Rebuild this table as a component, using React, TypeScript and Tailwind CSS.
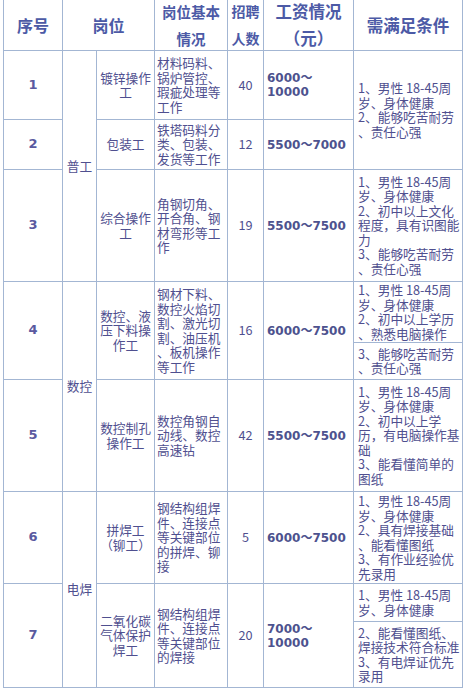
import React from "react";

const B = "border-r border-b border-[#a3b6d3]";

function Lines({ lines }: { lines: string[] }) {
  return (
    <div>
      {lines.map((l, i) => (
        <div key={i} className="whitespace-nowrap">
          {l}
        </div>
      ))}
    </div>
  );
}

type Row = {
  no: string;
  post: string[];
  desc: string[];
  count: string;
  salary: string[];
};

const rows: Row[] = [
  { no: "1", post: ["镀锌操作", "工"], desc: ["材料码料、", "锅炉管控、", "瑕疵处理等", "工作"], count: "40", salary: ["6000～", "10000"] },
  { no: "2", post: ["包装工"], desc: ["铁塔码料分", "类、包装、", "发货等工作"], count: "12", salary: ["5500～7000"] },
  { no: "3", post: ["综合操作", "工"], desc: ["角钢切角、", "开合角、钢", "材弯形等工", "作"], count: "19", salary: ["5500～7500"] },
  { no: "4", post: ["数控、液", "压下料操", "作工"], desc: ["钢材下料、", "数控火焰切", "割、激光切", "割、油压机", "、板机操作", "等工作"], count: "16", salary: ["6000～7500"] },
  { no: "5", post: ["数控制孔", "操作工"], desc: ["数控角钢自", "动线、数控", "高速钻"], count: "42", salary: ["5500～7500"] },
  { no: "6", post: ["拼焊工", "（铆工）"], desc: ["钢结构组焊", "件、连接点", "等关键部位", "的拼焊、铆", "接"], count: "5", salary: ["6000～7500"] },
  { no: "7", post: ["二氧化碳", "气体保护", "焊工"], desc: ["钢结构组焊", "件、连接点", "等关键部位", "的焊接"], count: "20", salary: ["7000～", "10000"] },
];

const rowStart = [
  "row-start-2",
  "row-start-3",
  "row-start-4",
  "row-start-5",
  "row-start-6",
  "row-start-7",
  "row-start-8",
];

export default function App() {
  return (
    <div className="w-[463px] h-[689px] overflow-hidden bg-white font-[family-name:'Noto_Sans_CJK_SC',sans-serif] text-[12.7px] leading-[14.5px] text-[#4f4f8f]">
      <div className="ml-[3px] border-l border-[#a3b6d3] grid grid-cols-[59px_34px_58px_73px_36px_90px_109px] grid-rows-[51px_69px_50px_112px_98px_112px_92px_104px]">
        {/* header */}
        <div className={`${B} col-start-1 row-start-1 flex items-center justify-center font-bold text-[16px] leading-[27px] text-[#4c5aa6]`}>序号</div>
        <div className={`${B} col-start-2 col-span-2 row-start-1 flex items-center justify-center font-bold text-[16px] leading-[27px] text-[#4c5aa6]`}>岗位</div>
        <div className={`${B} col-start-4 row-start-1 flex items-center justify-center text-center font-bold text-[14.5px] leading-[27px] text-[#4c5aa6]`}>
          <Lines lines={["岗位基本", "情况"]} />
        </div>
        <div className={`${B} col-start-5 row-start-1 flex items-center justify-center text-center font-bold text-[14px] leading-[27px] text-[#4c5aa6]`}>
          <Lines lines={["招聘", "人数"]} />
        </div>
        <div className={`${B} col-start-6 row-start-1 flex items-center justify-center text-center font-bold text-[16.5px] leading-[27px] text-[#4c5aa6]`}>
          <Lines lines={["工资情况", "（元）"]} />
        </div>
        <div className={`${B} col-start-7 row-start-1 flex items-center justify-center font-bold text-[16.5px] leading-[27px] text-[#4c5aa6]`}>需满足条件</div>

        {/* group column */}
        <div className={`${B} col-start-2 row-start-2 row-span-3 flex items-center justify-center`}>普工</div>
        <div className={`${B} col-start-2 row-start-5 row-span-2 flex items-center justify-center`}>数控</div>
        <div className={`${B} col-start-2 row-start-7 row-span-2 flex items-center justify-center`}>电焊</div>

        {rows.map((r, i) => (
          <React.Fragment key={r.no}>
            <div className={`${B} col-start-1 ${rowStart[i]} flex items-center justify-center font-[family-name:'DejaVu_Sans',sans-serif] font-bold text-[13px] text-[#5a5aa0]`}>
              {r.no}
            </div>
            <div className={`${B} col-start-3 ${rowStart[i]} flex items-center justify-center text-center`}>
              <Lines lines={r.post} />
            </div>
            <div className={`${B} col-start-4 ${rowStart[i]} flex items-center pl-[2px]`}>
              <Lines lines={r.desc} />
            </div>
            <div className={`${B} col-start-5 ${rowStart[i]} flex items-center justify-center`}>{r.count}</div>
            <div className={`${B} col-start-6 ${rowStart[i]} flex items-center pl-[3px] font-[family-name:'DejaVu_Sans','Noto_Sans_CJK_SC',sans-serif] font-bold text-[12px] leading-[14px] text-[#4d528e]`}>
              <Lines lines={r.salary} />
            </div>
          </React.Fragment>
        ))}

        {/* requirements */}
        <div className={`${B} col-start-7 row-start-2 row-span-2 flex items-center pl-[4px]`}>
          <Lines lines={["1、男性 18-45周", "岁、身体健康", "2、能够吃苦耐劳", "、责任心强"]} />
        </div>
        <div className={`${B} col-start-7 row-start-4 flex items-center pl-[4px]`}>
          <Lines lines={["1、男性 18-45周", "岁、身体健康", "2、初中以上文化", "程度，具有识图能", "力", "3、能够吃苦耐劳", "、责任心强"]} />
        </div>
        <div className={`${B} col-start-7 row-start-5 flex flex-col`}>
          <div className="h-[61px] border-b border-[#a3b6d3] flex items-center pl-[4px]">
            <Lines lines={["1、男性 18-45周", "岁、身体健康", "2、初中以上学历", "、熟悉电脑操作"]} />
          </div>
          <div className="flex-1 flex items-center pl-[4px]">
            <Lines lines={["3、能够吃苦耐劳", "、责任心强"]} />
          </div>
        </div>
        <div className={`${B} col-start-7 row-start-6 flex items-center pl-[4px]`}>
          <Lines lines={["1、男性 18-45周", "岁、身体健康", "2、初中以上学", "历，有电脑操作基", "础", "3、能看懂简单的", "图纸"]} />
        </div>
        <div className={`${B} col-start-7 row-start-7 flex items-center pl-[4px]`}>
          <Lines lines={["1、男性 18-45周", "岁、身体健康", "2、具有焊接基础", "、能看懂图纸", "3、有作业经验优", "先录用"]} />
        </div>
        <div className={`${B} col-start-7 row-start-8 flex flex-col`}>
          <div className="h-[38px] border-b border-[#a3b6d3] flex items-center pl-[4px]">
            <Lines lines={["1、男性 18-45周", "岁、身体健康"]} />
          </div>
          <div className="flex-1 flex items-center pl-[4px]">
            <Lines lines={["2、能看懂图纸、", "焊接技术符合标准", "3、有电焊证优先", "录用"]} />
          </div>
        </div>
      </div>
    </div>
  );
}
